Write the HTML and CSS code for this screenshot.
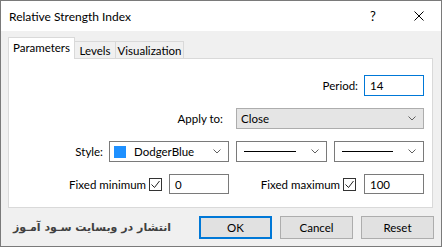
FILE: index.html
```html
<!DOCTYPE html>
<html>
<head>
<meta charset="utf-8">
<link rel="stylesheet" href="styles.css">
</head>
<body>
<div class="window">
  <div class="titlebar">
    <span class="title">Relative Strength Index</span>
    <span class="help">?</span>
    <span class="close"><svg width="10" height="10" viewBox="0 0 10 10"><path d="M0.5 0.5 L9.5 9.5 M9.5 0.5 L0.5 9.5" stroke="#000" stroke-width="1" fill="none"/></svg></span>
  </div>
  <div class="body">
    <div class="tabs">
      <div class="tab active t-params">Parameters</div>
      <div class="tab t-levels">Levels</div>
      <div class="tab t-vis">Visualization</div>
    </div>
    <div class="panel">
      <div class="grid">
        <div class="cell"></div>
        <div class="cell">
          <span class="label">Period:</span>
          <div class="textbox focus w60">14</div>
        </div>

        <div class="cell"><span class="label">Apply to:</span></div>
        <div class="cell">
          <div class="combo gray w188"><span class="ctext">Close</span><svg class="chev" width="8" height="5" viewBox="0 0 8 5"><path d="M0.5 0.5 L4 4 L7.5 0.5" stroke="#606060" fill="none"/></svg></div>
        </div>

        <div class="cell">
          <span class="label">Style:</span>
          <div class="combo w120"><span class="swatch"></span><span class="ctext">DodgerBlue</span><svg class="chev" width="8" height="5" viewBox="0 0 8 5"><path d="M0.5 0.5 L4 4 L7.5 0.5" stroke="#606060" fill="none"/></svg></div>
        </div>
        <div class="cell gap7">
          <div class="combo w91"><span class="line"></span><svg class="chev" width="8" height="5" viewBox="0 0 8 5"><path d="M0.5 0.5 L4 4 L7.5 0.5" stroke="#606060" fill="none"/></svg></div>
          <div class="combo w90"><span class="line"></span><svg class="chev" width="8" height="5" viewBox="0 0 8 5"><path d="M0.5 0.5 L4 4 L7.5 0.5" stroke="#606060" fill="none"/></svg></div>
        </div>

        <div class="cell">
          <span class="label">Fixed minimum</span>
          <span class="check"><svg width="11" height="11" viewBox="0 0 11 11"><path d="M1.5 5.5 L4.5 8.5 L9.5 2" stroke="#222" stroke-width="1" fill="none"/></svg></span>
          <div class="textbox w60 mleft">0</div>
        </div>
        <div class="cell">
          <span class="label">Fixed maximum</span>
          <span class="check"><svg width="11" height="11" viewBox="0 0 11 11"><path d="M1.5 5.5 L4.5 8.5 L9.5 2" stroke="#222" stroke-width="1" fill="none"/></svg></span>
          <div class="textbox w60 mleft8">100</div>
        </div>
      </div>
    </div>
    <div class="footer">
      <span class="watermark" dir="rtl">انتشار در وبسایت سـود آمـوز</span>
      <div class="buttons">
        <div class="btn default">OK</div>
        <div class="btn">Cancel</div>
        <div class="btn">Reset</div>
      </div>
    </div>
  </div>
</div>
</body>
</html>
```
FILE: styles.css
```css
* { box-sizing: border-box; }
html, body { margin: 0; padding: 0; }
body {
  width: 442px;
  height: 247px;
  font-family: Lato, "Liberation Sans", sans-serif;
  font-size: 11.5px;
  color: #000;
  background: #f0f0f0;
  overflow: hidden;
}
.window {
  width: 442px;
  height: 247px;
  border: 1px solid #7a7a7a;
  display: flex;
  flex-direction: column;
}
.titlebar {
  height: 30px;
  flex-shrink: 0;
  background: #fff;
  display: flex;
  align-items: center;
  padding-left: 8px;
}
.title { flex: 1; font-size: 12px; }
.help { width: 8px; margin-right: 36px; font-size: 13px; }
.close { width: 10px; height: 10px; display: flex; margin-right: 17px; }
.body {
  flex: 1;
  min-height: 0;
  background: #f0f0f0;
  padding: 6px 7px 0 7px;
  display: flex;
  flex-direction: column;
}
.tabs {
  height: 21px;
  flex-shrink: 0;
  display: flex;
  align-items: flex-end;
}
.tab {
  height: 17px;
  border: 1px solid #d9d9d9;
  border-bottom: none;
  background: #f0f0f0;
  display: flex;
  align-items: center;
  justify-content: center;
  margin-left: -1px;
  white-space: nowrap;
}
.tab.active {
  height: 22px;
  margin-bottom: -1px;
  margin-left: 0;
  background: #fff;
  position: relative;
  z-index: 1;
  padding-bottom: 2px;
}
.t-params { width: 67px; }
.t-levels { width: 42px; }
.t-vis { width: 69px; }
.panel {
  width: 425px;
  height: 150px;
  flex-shrink: 0;
  background: #fff;
  border: 1px solid #d9d9d9;
  padding: 16px 8px 0 8px;
}
.grid {
  display: grid;
  grid-template-columns: 1fr 188px;
  grid-template-rows: 21px 21px 21px 20px;
  column-gap: 7px;
  row-gap: 12px;
}
.cell {
  display: flex;
  align-items: center;
  justify-content: flex-end;
}
.gap7 { gap: 7px; }
.label { margin-right: 6px; white-space: nowrap; }
.textbox {
  height: 100%;
  border: 1px solid #7a7a7a;
  background: #fff;
  padding-left: 5px;
  display: flex;
  align-items: center;
}
.textbox.focus { border-color: #0078d7; }
.w60 { width: 60px; }
.mleft { margin-left: 7px; }
.mleft8 { margin-left: 8px; }
.combo {
  height: 100%;
  border: 1px solid #7a7a7a;
  background: #fff;
  display: flex;
  align-items: center;
  padding: 0 7px 0 4px;
}
.combo.gray { background: #e5e5e5; border-color: #adadad; }
.w188 { width: 188px; }
.w120 { width: 120px; }
.w91 { width: 91px; }
.w90 { width: 90px; }
.ctext { flex: 1; }
.swatch {
  width: 12px;
  height: 12px;
  background: #1e90ff;
  margin: 0 8px 0 0;
}
.line {
  flex: 1;
  height: 1px;
  background: #000;
  margin: 0 15px 0 3px;
}
.chev { display: block; }
.check {
  width: 13px;
  height: 13px;
  border: 1px solid #333;
  background: #fff;
  display: flex;
  align-items: center;
  justify-content: center;
  margin-left: -3px;
}
.footer {
  flex: 1;
  min-height: 0;
  display: flex;
  justify-content: space-between;
  align-items: flex-start;
  padding-top: 8px;
}
.watermark {
  font-family: "DejaVu Sans", sans-serif;
  font-weight: bold;
  font-size: 11px;
  color: #404040;
  padding-left: 5px;
  line-height: 23px;
  white-space: nowrap;
}
.buttons { display: flex; gap: 8px; flex-shrink: 0; }
.btn {
  width: 73px;
  height: 23px;
  background: #e1e1e1;
  border: 1px solid #adadad;
  display: flex;
  align-items: center;
  justify-content: center;
}
.btn.default { border: 2px solid #0078d7; }
```
